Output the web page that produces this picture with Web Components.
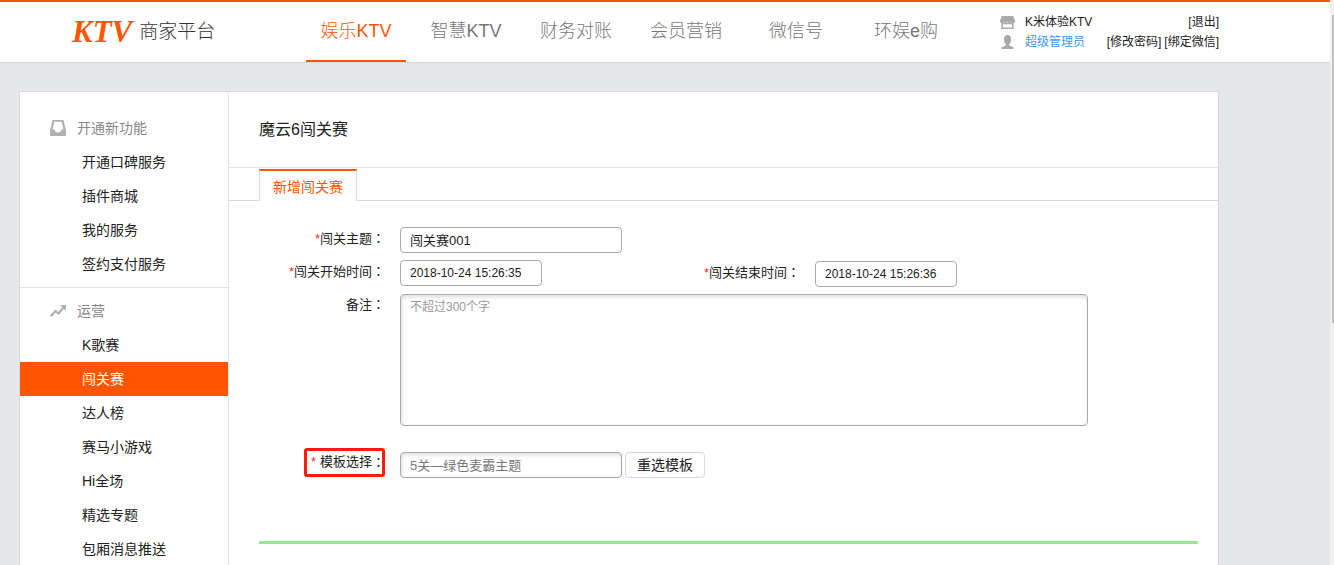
<!DOCTYPE html>
<html lang="zh-CN">
<head>
<meta charset="utf-8">
<title>KTV 商家平台</title>
<style>
  body { margin: 0; font-family: "Liberation Sans", "Noto Sans CJK SC", sans-serif; font-size: 14px; color: #222; background: #e6e7eb; }
</style>
</head>
<body>
<merchant-app>
  <top-header slot="header"></top-header>
  <side-menu slot="menu">
    <menu-section icon="inbox" heading="开通新功能">
      <menu-item>开通口碑服务</menu-item>
      <menu-item>插件商城</menu-item>
      <menu-item>我的服务</menu-item>
      <menu-item>签约支付服务</menu-item>
    </menu-section>
    <menu-section icon="trend" heading="运营">
      <menu-item>K歌赛</menu-item>
      <menu-item active>闯关赛</menu-item>
      <menu-item>达人榜</menu-item>
      <menu-item>赛马小游戏</menu-item>
      <menu-item>Hi全场</menu-item>
      <menu-item>精选专题</menu-item>
      <menu-item>包厢消息推送</menu-item>
    </menu-section>
  </side-menu>
  <contest-page></contest-page>
</merchant-app>

<script>
const ICONS = {
  store: '<svg width="15" height="13" viewBox="0 0 15 13"><path fill="#aaa" d="M1.500 0h12v1l1.500 3.500V6l-1 1h-2l-1-1-1 1H8.500l-1-1-1 1H5L4 6 3 7H1L0 6V4.500L1.500 1z"/><path fill="none" stroke="#aaa" stroke-width="1.600" d="M2.200 7.500v4.700h10.600V7.500z"/></svg>',
  person: '<svg width="15" height="14" viewBox="0 0 15 14"><path fill="#aaa" d="M7.500 0C10 0 11 1.800 11 4.500c0 2-.7 3.500-1.700 4.500v1.500l4.200 1.700V14h-12v-1.800l4.200-1.700V9C4.700 8 4 6.500 4 4.500 4 1.800 5 0 7.500 0z"/></svg>',
  inbox: '<svg width="16" height="16" viewBox="0 0 16 16"><path fill="#b0b0b0" fill-rule="evenodd" d="M2.500 0h11L16 10.500V16H0V10.500zM4.300 1.800L2.500 9.200h2c0 2 1.500 3.300 3.500 3.300s3.500-1.300 3.500-3.300h2L11.700 1.800z"/></svg>',
  trend: '<svg width="16" height="12" viewBox="0 0 16 12"><path fill="none" stroke="#b0b0b0" stroke-width="2.200" d="M.7 11.200L5.500 6l3 2.500 5-6"/><path fill="#b0b0b0" d="M10 0h6v6z"/></svg>'
};

function define(name, markup, setup) {
  const template = document.createElement('template');
  template.innerHTML = markup;
  customElements.define(name, class extends HTMLElement {
    constructor() {
      super();
      this.attachShadow({ mode: 'open' }).append(template.content.cloneNode(true));
    }
    connectedCallback() { if (setup) setup(this, this.shadowRoot); }
  });
}

define('ui-icon', `<style>
  :host { display: inline-flex; align-items: center; justify-content: center; flex: none; width: 16px; }
  svg { display: block; }
</style><span></span>`, (host, root) => {
  root.querySelector('span').innerHTML = ICONS[host.getAttribute('name')];
});

define('merchant-app', `<style>
  :host { display: grid; grid-template-columns: minmax(0, 1fr) 4px; height: 100vh; overflow: hidden; }
  .page { overflow: hidden; }
  .panel { display: grid; grid-template-columns: 209px minmax(0, 1fr); margin: 28px 111px 0 19px; background: #fff; border: 1px solid #d8d9dc; }
  .track { background: #f1f1f1; padding: 15px 0 0 2px; }
  .thumb { height: 56%; background: #c1c1c1; }
</style>
<div class="page">
  <slot name="header"></slot>
  <div class="panel"><slot name="menu"></slot><slot></slot></div>
</div>
<div class="track"><div class="thumb"></div></div>`);

define('top-header', `<style>
  :host { display: block; background: #fff; border-top: 2px solid #ff5500; border-bottom: 1px solid #d9d9d9; }
  header { display: flex; align-items: center; height: 60px; margin: 0 111px 0 19px; }
  a { color: inherit; text-decoration: none; white-space: nowrap; }
  .brand { display: flex; align-items: center; gap: 7px; box-sizing: border-box; width: 287px; padding-left: 53px; font-size: 19px; font-weight: 300; line-height: 56px; color: #333; }
  .brand b { font: italic bold 31px/56px "Liberation Serif", serif; color: #ff5500; }
  nav { display: flex; gap: 10px; }
  nav a { width: 100px; height: 58px; line-height: 58px; border-bottom: 2px solid transparent; text-align: center; font-size: 18px; font-weight: 300; color: #777; }
  nav a.on { color: #ff5500; border-color: #ff5500; }
  .user { display: grid; grid-template-columns: 16px auto; column-gap: 10px; margin-left: auto; width: 220px; font-size: 12px; line-height: 20px; }
  .line { display: flex; gap: 3px; }
  .line :first-child { margin-right: auto; }
  .role { color: #4297ea; }
</style>
<header>
  <a class="brand" href="#"><b>KTV</b><span>商家平台</span></a>
  <nav>
    <a class="on" href="#">娱乐KTV</a><a href="#">智慧KTV</a><a href="#">财务对账</a>
    <a href="#">会员营销</a><a href="#">微信号</a><a href="#">环娱e购</a>
  </nav>
  <div class="user">
    <ui-icon name="store"></ui-icon>
    <div class="line"><span>K米体验KTV</span><a href="#">[退出]</a></div>
    <ui-icon name="person"></ui-icon>
    <div class="line"><a class="role" href="#">超级管理员</a><a href="#">[修改密码]</a><a href="#">[绑定微信]</a></div>
  </div>
</header>`);

define('side-menu', `<style>
  :host { display: block; padding-top: 13px; border-right: 1px solid #e3e4e8; }
</style><nav><slot></slot></nav>`);

define('menu-section', `<style>
  :host { display: block; padding: 6px 0; }
  :host(:not(:first-child)) { border-top: 1px solid #e3e4e8; }
  .heading { display: flex; align-items: center; gap: 11px; line-height: 34px; padding-left: 30px; color: #888; }
</style>
<div class="heading"><ui-icon></ui-icon><span class="text"></span></div><slot></slot>`, (host, root) => {
  const icon = document.createElement('ui-icon');
  icon.setAttribute('name', host.getAttribute('icon'));
  root.querySelector('ui-icon').replaceWith(icon);
  root.querySelector('.text').textContent = host.getAttribute('heading');
});

define('menu-item', `<style>
  :host { display: block; }
  a { display: block; padding-left: 62px; line-height: 34px; color: #222; text-decoration: none; }
  :host([active]) a { background: #ff5500; color: #fff; }
</style><a href="#"><slot></slot></a>`);

define('form-field', `<style>
  :host { display: flex; gap: 15px; --label-line: 22px; }
  label { position: relative; box-sizing: border-box; flex: none; min-width: var(--label-width, 126px); height: var(--label-line); line-height: var(--label-line); text-align: right; font-size: 13px; white-space: nowrap; }
  i { font-style: normal; color: #ff2a2a; }
  .colon { font-family: "Noto Sans CJK TC", sans-serif; }
  input, textarea { display: block; box-sizing: border-box; height: 26px; margin: 0; padding: 0 9px; border: 1px solid #aaa; border-radius: 4px; background: #fff; font: inherit; font-size: 13px; line-height: 22px; color: #222; outline: 0; }
  input { width: 222px; padding-bottom: 2px; }
  :host([kind=time]) input { width: 142px; padding-bottom: 0; font-size: 12px; }
  textarea { flex: 1; max-width: 688px; height: 132px; padding: 4px 9px; font-size: 12px; line-height: 16px; resize: none; }
  textarea::placeholder { color: #999; }
  textarea, input:disabled { box-shadow: inset 1px 2px 4px #ddd; }
  input:disabled { color: #777; }
  :host([kind=note]), :host([kind=template]) { --label-line: 20px; }
  .action { display: flex; gap: 3px; }
  :host([kind=note]) .action { flex: 1; }
  :host([marked]) label { display: flex; justify-content: flex-end; }
  :host([marked]) i { margin-right: 4px; }
  :host([marked]) label::after { content: ""; position: absolute; inset: -4px 0 -5px 45px; border: 3px solid #ff1c0c; border-radius: 3px; }
</style>
<label for="control"><i></i><span class="text"></span><span class="colon" lang="zh-TW">：</span></label>
<div class="action"><input id="control" type="text"><slot></slot></div>`, (host, root) => {
  root.querySelector('i').textContent = host.hasAttribute('required') ? '*' : '';
  root.querySelector('.text').textContent = host.getAttribute('label');
  const control = root.querySelector('#control');
  if (host.getAttribute('kind') === 'note') {
    const area = document.createElement('textarea');
    area.id = 'control';
    area.placeholder = host.getAttribute('placeholder');
    control.replaceWith(area);
  } else {
    control.value = host.getAttribute('value');
    control.disabled = host.hasAttribute('locked');
  }
});

define('contest-page', `<style>
  :host { display: block; padding-bottom: 60px; }
  h1 { margin: 0; padding-left: 30px; font-size: 16px; font-weight: 400; line-height: 75px; border-bottom: 1px solid #e3e4e8; }
  .tabs { display: flex; box-sizing: border-box; height: 33px; padding: 1px 30px 0; border-bottom: 1px solid #d9d9d9; }
  .tabs a { box-sizing: border-box; width: 98px; height: 32px; line-height: 32px; text-align: center; color: #ff5500; text-decoration: none; background: #fff; border: 1px solid #d9d9d9; border-top: 2px solid #ff5500; border-bottom: 0; }
  form { display: grid; row-gap: 7px; padding: 26px 20px 0 30px; }
  .times { display: flex; }
  .end { --label-width: 258px; padding-top: 1px; }
  .template { margin-top: 19px; }
  button { height: 26px; width: 80px; padding: 0; border: 1px solid #d9d9d9; border-radius: 4px; background: #fff; font: inherit; line-height: 24px; color: #222; }
  hr { width: 100%; height: 3px; margin: 56px 0 0; border: 0; background: #90ee90; }
</style>
<h1>魔云6闯关赛</h1>
<div class="tabs"><a href="#">新增闯关赛</a></div>
<form>
  <form-field label="闯关主题" required value="闯关赛001"></form-field>
  <div class="times">
    <form-field kind="time" label="闯关开始时间" required value="2018-10-24 15:26:35"></form-field>
    <form-field class="end" kind="time" label="闯关结束时间" required value="2018-10-24 15:26:36"></form-field>
  </div>
  <form-field kind="note" label="备注" placeholder="不超过300个字"></form-field>
  <form-field class="template" kind="template" marked locked label="模板选择" required value="5关—绿色麦霸主题"><button type="button">重选模板</button></form-field>
  <hr>
</form>`);
</script>
</body>
</html>
